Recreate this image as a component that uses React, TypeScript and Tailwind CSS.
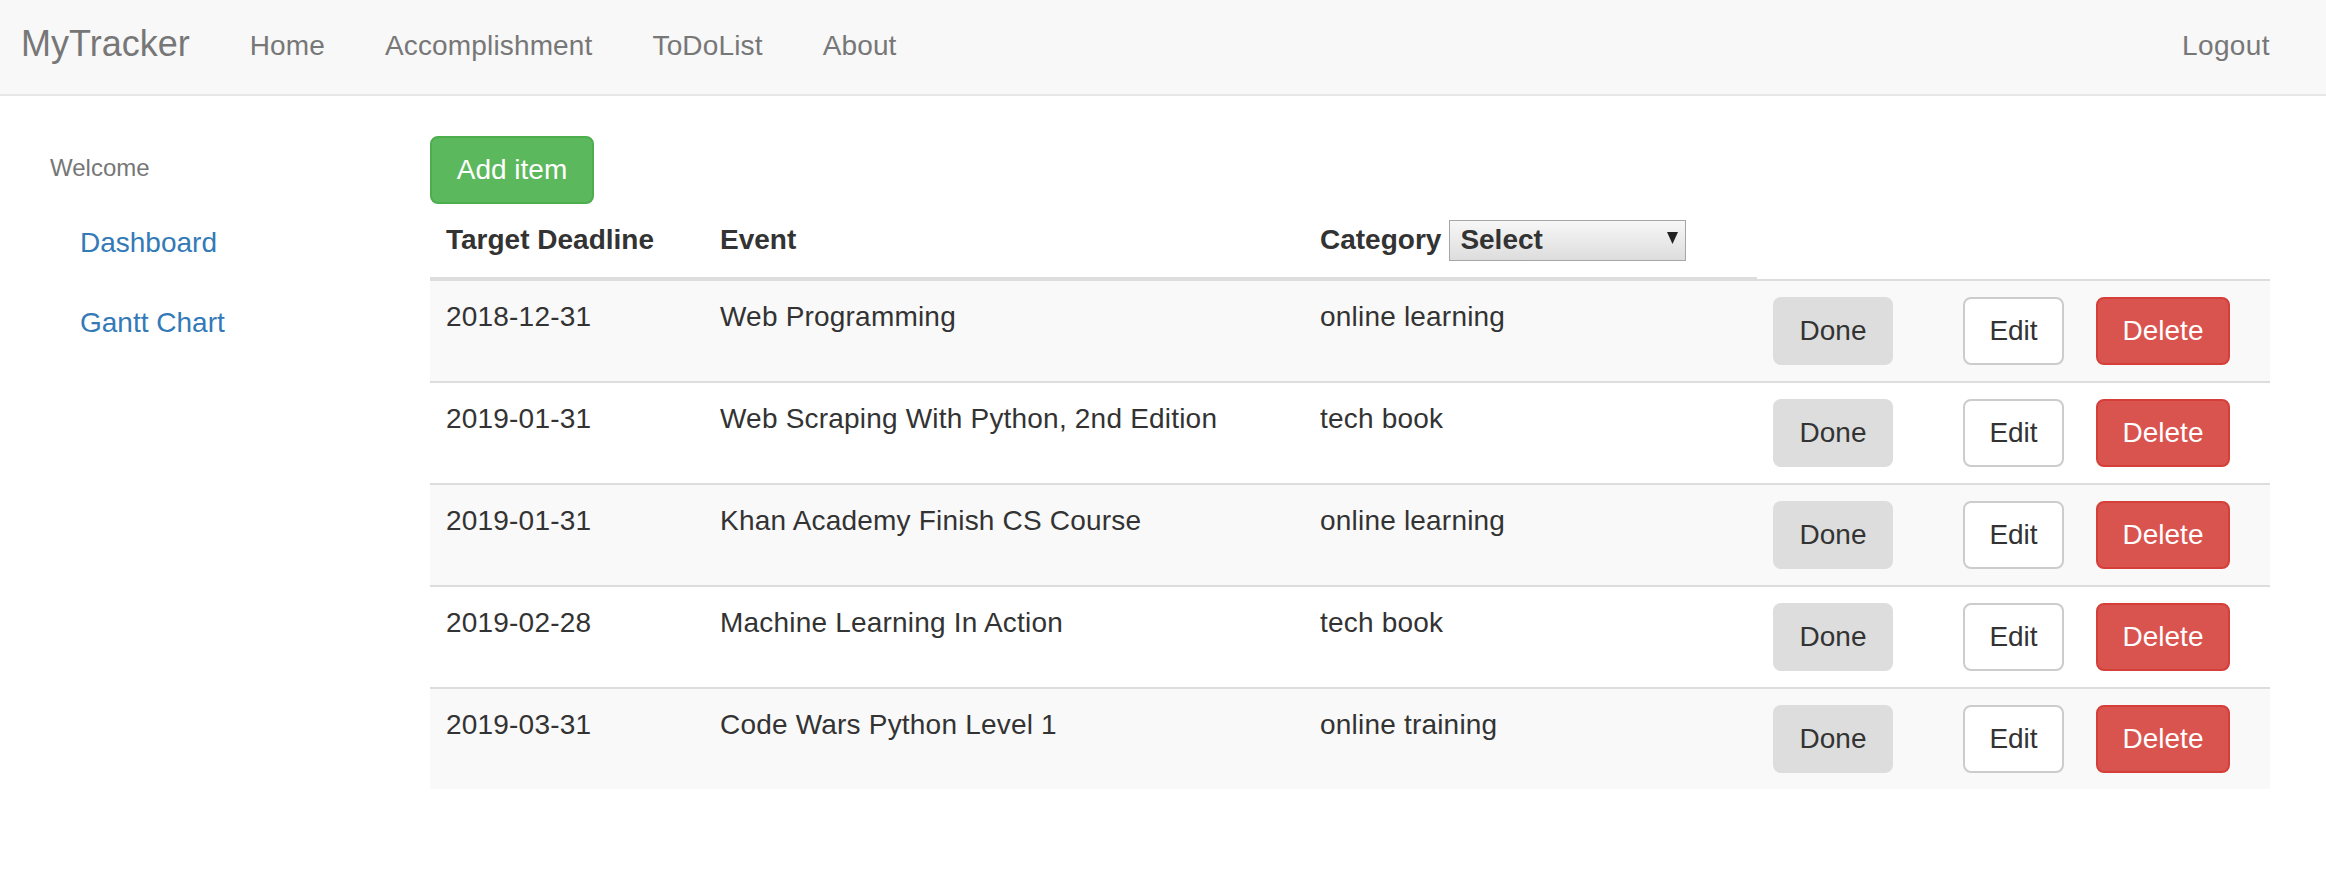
import React from 'react';

type Item = { deadline: string; event: string; category: string };

const items: Item[] = [
  { deadline: '2018-12-31', event: 'Web Programming', category: 'online learning' },
  { deadline: '2019-01-31', event: 'Web Scraping With Python, 2nd Edition', category: 'tech book' },
  { deadline: '2019-01-31', event: 'Khan Academy Finish CS Course', category: 'online learning' },
  { deadline: '2019-02-28', event: 'Machine Learning In Action', category: 'tech book' },
  { deadline: '2019-03-31', event: 'Code Wars Python Level 1', category: 'online training' },
];

const navLinks = ['Home', 'Accomplishment', 'ToDoList', 'About'];

const Navbar = () => (
  <nav className="flex h-[96px] items-start border-b-2 border-[#e7e7e7] bg-[#f8f8f8] pr-[26px] text-[#777]">
    <a className="pl-[21px] pr-[30px] pt-[24px] text-[36px] leading-[40px]">MyTracker</a>
    <ul className="flex">
      {navLinks.map((l) => (
        <li key={l} className="px-[30px] pt-[26px] text-[28px] leading-[40px] tracking-[0.15px]">
          {l}
        </li>
      ))}
    </ul>
    <a className="ml-auto px-[30px] pt-[26px] text-[28px] leading-[40px] tracking-[0.4px]">Logout</a>
  </nav>
);

const Sidebar = () => (
  <aside className="w-[430px] shrink-0 pl-[50px] pt-[15px]">
    <p className="text-[24px] leading-[34px] text-[#777]">Welcome</p>
    <ul className="mt-[18px] text-[28px] leading-[40px] text-[#337ab7]">
      <li className="py-[20px] pl-[30px]">Dashboard</li>
      <li className="py-[20px] pl-[30px]">Gantt Chart</li>
    </ul>
  </aside>
);

const CategorySelect = () => (
  <span className="ml-[8px] flex h-[41px] w-[237px] items-center justify-between border border-[#a6a6a6] bg-gradient-to-b from-[#f7f7f7] to-[#dddddd] pl-[10px] pr-[7px] font-bold text-[#333]">
    <span>Select</span>
    <svg width="11" height="12" viewBox="0 0 11 12" className="mb-[4px]">
      <polygon points="0,0 11,0 5.5,12" fill="#222" />
    </svg>
  </span>
);

const rowGrid = 'grid grid-cols-[274px_600px_453px_190px_133px_190px]';

export default function App() {
  return (
    <div className="min-h-[872px] bg-white font-['Liberation_Sans',Arial,sans-serif] text-[#333]">
      <Navbar />
      <div className="flex pt-[40px]">
        <Sidebar />
        <main className="w-[1840px]">
          <button className="flex h-[68px] w-[164px] items-center justify-center rounded-[8px] border-2 border-[#4cae4c] bg-[#5cb85c] text-[28px] leading-[40px] text-white">
            Add item
          </button>

          <div className={`${rowGrid} text-[28px] font-bold leading-[40px]`}>
            <div className="h-[77px] border-b-4 border-[#ddd] px-[16px] pt-[16px]">Target Deadline</div>
            <div className="h-[77px] border-b-4 border-[#ddd] px-[16px] pt-[16px]">Event</div>
            <div className="h-[77px] border-b-4 border-[#ddd] px-[16px] pt-[16px]">
              <div className="flex h-[40px] items-center">
                <span>Category</span>
                <CategorySelect />
              </div>
            </div>
            <div className="col-span-3 h-[77px] border-b-2 border-[#ddd]" />
          </div>

          {items.map((it, i) => (
            <div
              key={i}
              className={`${rowGrid} text-[28px] leading-[40px] ${i > 0 ? 'border-t-2 border-[#ddd]' : ''} ${i % 2 === 0 ? 'bg-[#f9f9f9]' : 'bg-white'}`}
            >
              <div className="px-[16px] pt-[16px] tracking-[0.2px]">{it.deadline}</div>
              <div className="px-[16px] pt-[16px] tracking-[0.2px]">{it.event}</div>
              <div className="px-[16px] pt-[16px] tracking-[0.2px]">{it.category}</div>
              <div className="px-[16px] py-[16px]">
                <button className="flex h-[68px] w-[120px] items-center justify-center rounded-[8px] bg-[#ddd] text-[#333]">
                  Done
                </button>
              </div>
              <div className="px-[16px] py-[16px]">
                <button className="flex h-[68px] w-[101px] items-center justify-center rounded-[8px] border-2 border-[#ccc] bg-white text-[#333]">
                  Edit
                </button>
              </div>
              <div className="px-[16px] py-[16px]">
                <button className="flex h-[68px] w-[134px] items-center justify-center rounded-[8px] border-2 border-[#d43f3a] bg-[#d9534f] text-white">
                  Delete
                </button>
              </div>
            </div>
          ))}
        </main>
      </div>
    </div>
  );
}
